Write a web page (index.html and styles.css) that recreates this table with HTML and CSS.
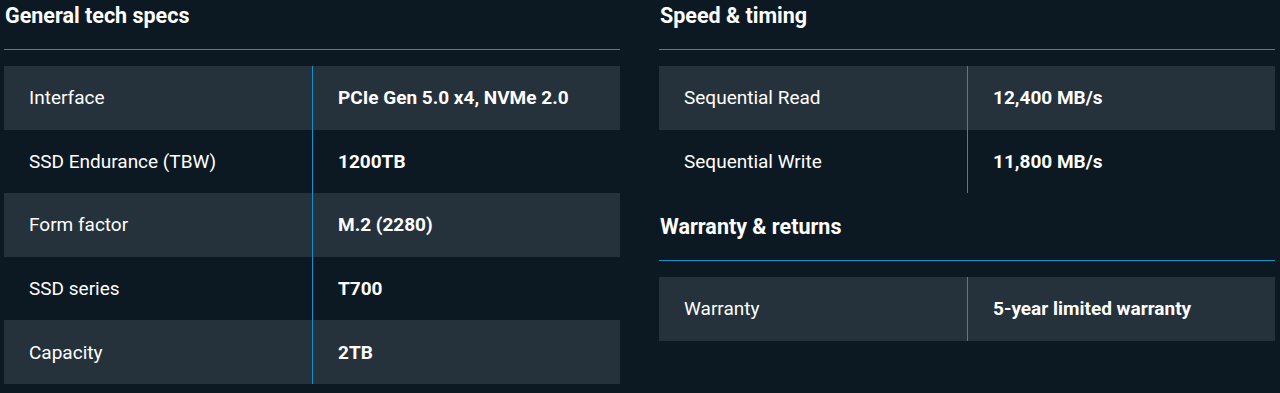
FILE: index.html
```html
<!DOCTYPE html>
<html lang="en">
<head>
<meta charset="utf-8">
<link rel="stylesheet" href="styles.css">
</head>
<body>
<div class="specs">
  <div class="col">
    <section class="group">
      <h2 class="title">General tech specs</h2>
      <div class="table">
        <div class="row shaded"><div class="label">Interface</div><div class="value">PCIe Gen 5.0 x4, NVMe 2.0</div></div>
        <div class="row"><div class="label">SSD Endurance (TBW)</div><div class="value">1200TB</div></div>
        <div class="row shaded"><div class="label">Form factor</div><div class="value">M.2 (2280)</div></div>
        <div class="row"><div class="label">SSD series</div><div class="value">T700</div></div>
        <div class="row shaded"><div class="label">Capacity</div><div class="value">2TB</div></div>
      </div>
    </section>
  </div>
  <div class="col">
    <section class="group">
      <h2 class="title">Speed &amp; timing</h2>
      <div class="table">
        <div class="row shaded"><div class="label">Sequential Read</div><div class="value">12,400 MB/s</div></div>
        <div class="row"><div class="label">Sequential Write</div><div class="value">11,800 MB/s</div></div>
      </div>
    </section>
    <section class="group next">
      <h2 class="title">Warranty &amp; returns</h2>
      <div class="table">
        <div class="row shaded"><div class="label">Warranty</div><div class="value">5-year limited warranty</div></div>
      </div>
    </section>
  </div>
</div>
</body>
</html>
```
FILE: styles.css
```css
html, body {
  margin: 0;
  padding: 0;
  background: #0c1923;
  color: #ffffff;
  font-family: Roboto, "Liberation Sans", sans-serif;
}
.specs {
  display: flex;
  gap: 39px;
  padding-left: 4px;
}
.col {
  width: 616px;
  display: flex;
  flex-direction: column;
}
.group.next {
  margin-top: 18px;
}
.title {
  margin: 0 0 16px 0;
  font-size: 21.5px;
  font-weight: 700;
  line-height: 32px;
  padding: 0 0 17px 1px;
  border-bottom: 1px solid #0e93cf;
}
.table {
  display: flex;
  flex-direction: column;
}
.row {
  display: grid;
  grid-template-columns: 308px 1fr;
  height: 63.6px;
}
.row.shaded {
  background: #25313b;
}
.label, .value {
  display: flex;
  align-items: center;
  padding-left: 25px;
  font-size: 19px;
}
.label {
  font-weight: 400;
}
.value {
  font-weight: 700;
  border-left: 1px solid #0e93cf;
}
```
